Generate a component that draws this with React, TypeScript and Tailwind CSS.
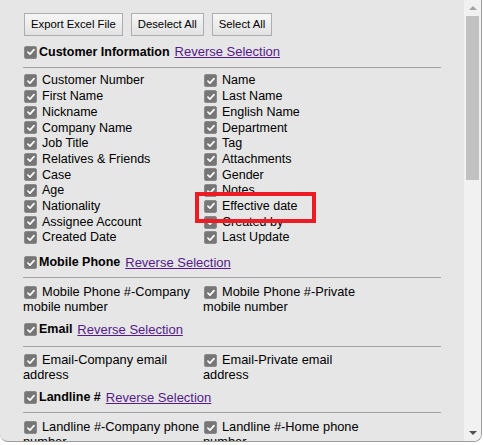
import React from 'react';

const font = { fontFamily: '"Liberation Sans", Arial, sans-serif' };

function Box() {
  return (
    <span className="inline-flex w-[13px] h-[13px] shrink-0 items-center justify-center rounded-[2px] border border-[#8a8a8a] bg-[#767676] align-[-2px]">
      <svg viewBox="0 0 12 12" className="w-[10px] h-[10px]">
        <path d="M2.3 6.2 L4.8 8.6 L9.6 3.2" fill="none" stroke="#ffffff" strokeWidth="2" strokeLinecap="round" strokeLinejoin="round" />
      </svg>
    </span>
  );
}

const customerLeft = [
  'Customer Number', 'First Name', 'Nickname', 'Company Name', 'Job Title',
  'Relatives & Friends', 'Case', 'Age', 'Nationality', 'Assignee Account', 'Created Date',
];
const customerRight = [
  'Name', 'Last Name', 'English Name', 'Department', 'Tag', 'Attachments',
  'Gender', 'Notes', 'Effective date', 'Created by', 'Last Update',
];

function Header({ title, className }: { title: string; className: string }) {
  return (
    <div className={`flex items-center h-[16px] ${className}`}>
      <span className="ml-[1px] flex"><Box /></span>
      <span className="ml-[2px] text-[12.5px] font-bold text-black">{title}</span>
      <a href="#" className="ml-[5px] text-[13px] text-[#551a8b] underline">Reverse Selection</a>
    </div>
  );
}

function Wrapped({ left, right, className }: { left: string; right: string; className: string }) {
  return (
    <div className={`text-[12.8px] leading-[15.5px] text-black ${className}`}>
      <span className="inline-block w-[180px] align-top">
        <span className="ml-[1px] mr-[5px]"><Box /></span>
        {left}
      </span>
      <span className="inline-block w-[168px] align-top">
        <span className="ml-[1px] mr-[5px]"><Box /></span>
        {right}
      </span>
    </div>
  );
}

export default function App() {
  return (
    <div className="w-[483px] h-[445px] bg-white overflow-hidden" style={font}>
      <div className="flex w-[482px] h-[442px] overflow-hidden rounded-b-[8px] border-r border-b border-[#9c9c9c] bg-[#e6e6e6]">
        <div className="flex-1 pl-[23px] pr-[23px] pt-[13px] overflow-hidden">
          <div className="flex gap-[8px] pl-[1px]">
            {['Export Excel File', 'Deselect All', 'Select All'].map((b) => (
              <button
                key={b}
                className="h-[23px] px-[6px] text-[11.3px] text-black border border-[#adadad] bg-gradient-to-b from-[#f7f7f7] to-[#e2e2e2]"
              >
                {b}
              </button>
            ))}
          </div>

          <Header title="Customer Information" className="mt-[8px]" />
          <div className="mt-[7px] h-px bg-[#a2a2a2]" />
          <div className="relative mt-[5px] grid grid-cols-[180px_180px] text-[12.5px] text-black">
            <div>
              {customerLeft.map((t) => (
                <div key={t} className="flex items-center h-[15.7px]">
                  <span className="ml-[1px] flex"><Box /></span>
                  <span className="ml-[5px]">{t}</span>
                </div>
              ))}
            </div>
            <div>
              {customerRight.map((t) => (
                <div key={t} className="flex items-center h-[15.7px]">
                  <span className="ml-[1px] flex"><Box /></span>
                  <span className="ml-[5px]">{t}</span>
                </div>
              ))}
            </div>
            <div className="pointer-events-none absolute left-[172px] top-[119px] w-[121px] h-[31px] border-[4.5px] border-[#ec1c24]" />
          </div>

          <Header title="Mobile Phone" className="mt-[9px]" />
          <div className="mt-[6px] h-px bg-[#a2a2a2]" />
          <Wrapped className="mt-[6px]" left="Mobile Phone #-Company mobile number" right="Mobile Phone #-Private mobile number" />

          <Header title="Email" className="mt-[7px]" />
          <div className="mt-[8px] h-px bg-[#a2a2a2]" />
          <Wrapped className="mt-[5px]" left="Email-Company email address" right="Email-Private email address" />

          <Header title="Landline #" className="mt-[7px]" />
          <div className="mt-[6px] h-px bg-[#a2a2a2]" />
          <Wrapped className="mt-[6px]" left="Landline #-Company phone number" right="Landline #-Home phone number" />
        </div>

        <div className="flex w-[17px] flex-col bg-[#f1f1f1]">
          <div className="flex h-[16px] items-center justify-center">
            <svg viewBox="0 0 8 4" className="w-[8px] h-[4px]"><path d="M0 4 L4 0 L8 4 Z" fill="#a3a3a3" /></svg>
          </div>
          <div className="mx-[2px] h-[164px] bg-[#c1c1c1]" />
          <div className="flex-1" />
          <div className="flex h-[16px] items-center justify-center">
            <svg viewBox="0 0 8 4" className="w-[8px] h-[4px]"><path d="M0 0 L8 0 L4 4 Z" fill="#505050" /></svg>
          </div>
        </div>
      </div>
    </div>
  );
}
